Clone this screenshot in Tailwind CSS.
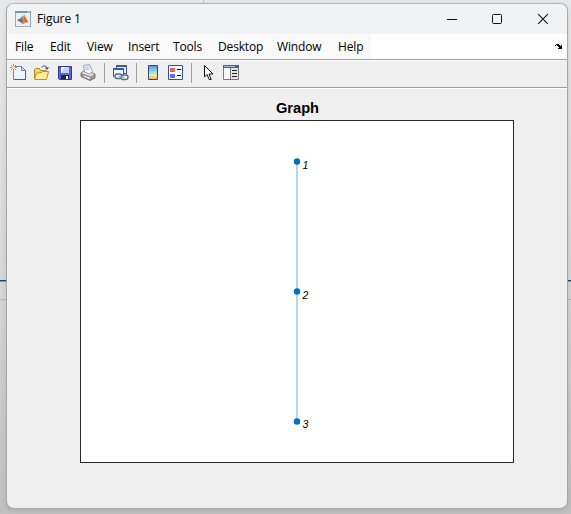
<!DOCTYPE html>
<html lang="en">
<head>
<meta charset="utf-8">
<title>Figure 1</title>
<script src="https://cdn.jsdelivr.net/npm/@tailwindcss/browser@4"></script>
</head>
<body class="relative w-[571px] h-[514px] overflow-hidden bg-linear-to-b from-[#e9e9e9] via-[#d9d9d9] to-[#c0c0c0] pl-[6px] pt-[3px] font-['Open_Sans','Noto_Sans',sans-serif] text-black">
<!-- desktop lines behind the window -->
<div class="absolute left-0 top-[280px] w-full h-[2px] bg-[#8c9cb0] border-t border-[#07468a]"></div>
<div class="absolute left-0 top-[299px] w-full h-px bg-[#b8b8b8]"></div>
<div class="absolute left-[203px] top-0 w-px h-[3px] bg-[#c4c4c4]"></div>

<main class="relative w-[562px] h-[506px] rounded-[8px] border border-[#a9a9a9] border-t-[#b4b4b4] bg-[#efefef] overflow-hidden flex flex-col shadow-[0_1px_5px_rgba(0,0,0,0.12)]">
  <header class="h-[30px] shrink-0 bg-[#f0f2f4] flex items-center pl-[8px]">
    <svg class="w-4 h-4" viewBox="0 0 16 16">
      <defs>
        <linearGradient id="flame" x1="0" x2="1"><stop offset="0" stop-color="#8b2214"/><stop offset=".4" stop-color="#f08b2c"/><stop offset="1" stop-color="#c83a18"/></linearGradient>
      </defs>
      <rect x=".5" y=".5" width="15" height="15" fill="#eef1f4" stroke="#9aaab8"/>
      <path d="M0 0h16v2H0z" fill="#7595b3"/><path d="M12 .5h3v1h-3z" fill="#c5d5e3"/>
      <path d="M2 9l3.2-1.6L8 4.5 6.8 10 5 11z" fill="#3c80b8"/>
      <path d="M5 11l2-2.5L9 3.2c1.2 1.3 2.2 5 4.5 8.3-1.5-.8-2.6-.7-3.6.2L7.5 13.3C7 12 6 11.2 5 11z" fill="url(#flame)"/>
    </svg>
    <h1 class="ml-[6px] w-[364px] text-[12px] leading-[16px] tracking-[-0.12px]">Figure 1</h1>
    <div class="flex items-center">
      <svg class="w-[46px] h-[28px]" viewBox="0 0 46 28" fill="none" stroke="#000" stroke-width="1"><path d="M56 14h10M56 14"/><path d="M55 14"/><path d="M56 14"/><path d="M57 14"/><path d="M56 14"/></svg>
      <svg class="-ml-[1px] w-[12px] h-[12px]" viewBox="0 0 12 12" fill="none" stroke="#111"><path d="M1 6.5h10"/></svg>
      <svg class="ml-[33px] w-[12px] h-[12px]" viewBox="0 0 12 12" fill="none" stroke="#111"><rect x="1.5" y="1.5" width="9" height="9" rx="1"/></svg>
      <svg class="ml-[34px] w-[12px] h-[12px]" viewBox="0 0 12 12" fill="none" stroke="#111" stroke-width="1.1"><path d="M1.2 1.2l9.6 9.6M10.8 1.2L1.2 10.8"/></svg>
    </div>
  </header>

  <nav class="h-[25px] shrink-0 bg-white flex justify-between items-stretch">
    <div class="w-[364px] bg-[#f9f9f9] pl-[8px] pt-[5px] grid grid-cols-[35px_37px_41px_45px_45px_59px_61px_30px] text-[12px] leading-[16px] tracking-[-0.15px] whitespace-nowrap">
      <span>File</span><span>Edit</span><span>View</span><span>Insert</span><span>Tools</span><span>Desktop</span><span>Window</span><span>Help</span>
    </div>
    <svg class="mt-[10px] mr-[5px] w-[7px] h-[6px]" viewBox="0 0 7 6" shape-rendering="crispEdges"><path d="M0 1h1v1H0zM1 0h3v1H1zM2 1h3v1H2zM3 2h2v1H3zM6 1h1v4H6zM5 2h1v3H5zM4 3h1v2H4zM3 4h1v1H3z"/></svg>
  </nav>

  <div class="h-[29px] shrink-0 border-t border-b border-[#9c9c9c] shadow-[inset_0_1px_0_#fff] flex items-center pl-[3px] pb-[2px]">
    <!-- new -->
    <svg class="w-[17px] h-[17px]" viewBox="0 0 17 17"><path d="M3.5 2.5h8l4 4v9h-12z" fill="#edf6ff" stroke="#6688b5"/><path d="M11.5 2.5v4h4z" fill="#cfe2f7" stroke="#6688b5"/><path d="M15.5 7v8.5H4" fill="none" stroke="#3d5f93"/><g stroke="#e17a51"><path d="M3.5 0v7M0 3.5h7M1 1l5 5M6 1L1 6"/></g><circle cx="3.5" cy="3.5" r="1.5" fill="#ffe6b0"/></svg>
    <!-- open -->
    <svg class="ml-[6px] w-[17px] h-[17px]" viewBox="0 0 17 17"><path d="M1.5 14V5.5L2.500 4.500h4l1 2h5.500v7.500z" fill="#f6d66a" stroke="#b6881c"/><path d="M1.500 15.500l2-6.500 5-.5 1-1h6l-2 8z" fill="#ffec99" stroke="#bd9020"/><path d="M8.500 3.500c2-2.500 4.500-2 5.500.5" fill="none" stroke="#344f70"/><path d="M12 3.500h4l-2 2.500z" fill="#344f70"/></svg>
    <!-- save -->
    <svg class="ml-[7px] w-[16px] h-[17px]" viewBox="0 0 16 17"><path d="M1.500 2.500h13v13h-12l-1-1z" fill="#5866cf" stroke="#30368d"/><path d="M4 3h8v6H4z" fill="#eef3ff"/><path d="M8 3h4v6H4z" fill="#c5d1f1"/><path d="M4 11h8v4H4z" fill="#20264f"/><path d="M9 12h2v3H9z" fill="#fff"/></svg>
    <!-- print -->
    <svg class="ml-[7px] w-[16px] h-[17px]" viewBox="0 0 16 17"><path d="M1 9l4-3 10 4v4l-5 2.500-9-4z" fill="#969696" stroke="#626262" stroke-width=".8"/><path d="M1.500 9L5 6.500l9.500 3.800L10 12.500z" fill="#dedede"/><path d="M4.500 8l-1-6.500 6-1 3 7-3 2.500z" fill="#edf4fc" stroke="#8a9199" stroke-width=".8"/><path d="M5 3.500l4-.7M5.500 5.500l4-.7" stroke="#a5bcd5"/><path d="M2 12l7 3.500 3-1.500-8-3z" fill="#f5f5f5" stroke="#666" stroke-width=".6"/><path d="M11 13.500l3-1.500" stroke="#cfa83a"/></svg>
    <i class="ml-[8px] w-px h-[20px] bg-[#a0a0a0]"></i>
    <!-- link plot -->
    <svg class="ml-[7px] w-[17px] h-[17px]" viewBox="0 0 17 17"><path d="M4.500 1.500h10v8h-10z" fill="#e4eefb" stroke="#355b9d"/><path d="M4 1h11v2H4z" fill="#355b9d"/><path d="M1.500 4.500h10v8h-10z" fill="#edf4fd" stroke="#355b9d"/><path d="M1 4h11v2H1z" fill="#355b9d"/><g fill="#e7eef4" stroke="#526d87" stroke-width="1.300"><rect x="3" y="10" width="7" height="4.500" rx="2.200"/><rect x="9" y="11" width="7" height="4.500" rx="2.200"/></g><path d="M7 12.300l5 1" stroke="#8ea6bb" stroke-width="1.300"/></svg>
    <i class="ml-[7px] w-px h-[20px] bg-[#a0a0a0]"></i>
    <!-- colorbar -->
    <svg class="ml-[10px] w-[12px] h-[17px]" viewBox="0 0 12 17"><defs><linearGradient id="bar" x1="0" y1="0" x2="0" y2="1"><stop stop-color="#6788e9"/><stop offset=".4" stop-color="#83d8e8"/><stop offset=".7" stop-color="#f5ed98"/><stop offset="1" stop-color="#f4a477"/></linearGradient></defs><path d="M1.500 1.500h9v14h-9z" fill="url(#bar)" stroke="#34486c"/></svg>
    <!-- legend -->
    <svg class="ml-[8px] w-[17px] h-[17px]" viewBox="0 0 17 17"><path d="M1.500 1.500h14v14h-14z" fill="#f3f8ff" stroke="#30508c"/><path d="M3 4h5v4H3z" fill="#e75d5a"/><path d="M3 10h5v4H3z" fill="#626be8"/><path d="M10 5.500h4M10 11.500h4" stroke="#111"/></svg>
    <i class="ml-[7px] w-px h-[20px] bg-[#a0a0a0]"></i>
    <!-- pointer -->
    <svg class="ml-[11px] w-[11px] h-[17px]" viewBox="0 0 11 17"><path d="M1.500 1.500v11.500l2.500-2.500 2.200 5h2L6 10h4z" fill="#fff" stroke="#111"/></svg>
    <!-- inspector -->
    <svg class="ml-[8px] w-[17px] h-[17px]" viewBox="0 0 17 17"><path d="M1.500 1.500h15v14h-15z" fill="#e4e4e4" stroke="#797979"/><path d="M1 1h16v3H1z" fill="#3e6581"/><path d="M2 2h11v1H2z" fill="#9ec7df"/><path d="M2 4h6v11H2z" fill="#f8f8f8"/><path d="M8.500 4v11" stroke="#777"/><path d="M10 6.500h5M10 9.500h5M10 12.500h5" stroke="#222"/></svg>
  </div>

  <section class="flex-1 border-t border-white pl-[73px] pt-[10px]">
    <h2 class="w-[434px] pl-[1px] h-[21px] text-center text-[14.67px] leading-[18px] font-bold font-['Liberation_Sans',Arial,sans-serif]">Graph</h2>
    <svg class="block w-[434px] h-[343px]" viewBox="0 0 434 343" font-family="Liberation Sans, Arial, sans-serif" font-size="10.5" font-style="italic">
      <rect x=".5" y=".5" width="433" height="342" fill="#fff" stroke="#262626"/>
      <path d="M217 41v260" stroke="#b3d6ea" stroke-width="2"/>
      <g fill="#0072bd"><circle cx="217" cy="41.500" r="3.200"/><circle cx="217" cy="171.500" r="3.200"/><circle cx="217" cy="301.500" r="3.200"/></g>
      <g fill="#000"><text x="222.500" y="49">1</text><text x="222.500" y="179">2</text><text x="222.500" y="308">3</text></g>
    </svg>
  </section>
</main>
</body>
</html>
